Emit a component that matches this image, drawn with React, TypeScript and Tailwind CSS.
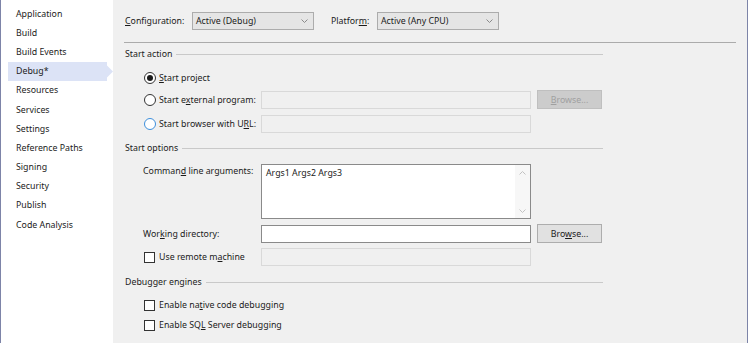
import type { ReactNode } from 'react';

const navItems = [
  'Application',
  'Build',
  'Build Events',
  'Debug*',
  'Resources',
  'Services',
  'Settings',
  'Reference Paths',
  'Signing',
  'Security',
  'Publish',
  'Code Analysis',
];

function Key({ children }: { children: ReactNode }) {
  return <span className="underline underline-offset-1">{children}</span>;
}

function Chevron({ up, color = '#8a8a8a' }: { up?: boolean; color?: string }) {
  return (
    <svg width="7" height="4" viewBox="0 0 7 4" fill="none" stroke={color} strokeWidth="1">
      {up ? <polyline points="0.5 3.5 3.5 0.5 6.5 3.5" /> : <polyline points="0.5 0.5 3.5 3.5 6.5 0.5" />}
    </svg>
  );
}

function Dropdown({ value }: { value: string }) {
  return (
    <div className="w-[122px] h-[18px] border border-[#acacac] bg-[#e5e5e5] flex items-center justify-between pl-[3px] pr-[5px]">
      <span>{value}</span>
      <Chevron />
    </div>
  );
}

function SectionHeader({ title }: { title: string }) {
  return (
    <div className="w-[479px] h-[14px] flex items-center gap-[4px] pl-px">
      <span>{title}</span>
      <div className="flex-1 h-px bg-[#c9c9c9]" />
    </div>
  );
}

function Radio({ checked, focus }: { checked?: boolean; focus?: boolean }) {
  return (
    <span
      className={`w-[12px] h-[12px] rounded-full border bg-white flex items-center justify-center flex-shrink-0 ${
        focus ? 'border-[#3d8fdc]' : 'border-[#333333]'
      }`}
    >
      {checked && <span className="w-[6px] h-[6px] rounded-full bg-[#1b1b1b]" />}
    </span>
  );
}

function Checkbox() {
  return <span className="w-[11px] h-[11px] border border-[#333333] bg-white flex-shrink-0" />;
}

function DisabledInput() {
  return <div className="w-[270px] h-[18px] border border-[#d9d9d9] bg-[#f0f0f0]" />;
}

export default function App() {
  return (
    <div className="w-[749px] h-[343px] overflow-hidden flex bg-white text-[8.8px] text-[#1b1b1b] font-['Noto_Sans',sans-serif] leading-[14px]">
      {/* Sidebar */}
      <div className="w-[113px] h-full bg-white border-l border-[#7d84a8] pt-[4px] flex flex-col">
        {navItems.map((item) => {
          const selected = item === 'Debug*';
          return (
            <div key={item} className="h-[19.2px] flex items-center">
              <div className={`w-[99px] h-full ml-[7px] flex items-center pl-[8px] ${selected ? 'bg-[#dce3f6]' : ''}`}>
                {item}
              </div>
              {selected && (
                <svg width="6" height="19" viewBox="0 0 6 19">
                  <polygon points="0,3.5 6,9.5 0,15.5" fill="#dce3f6" />
                </svg>
              )}
            </div>
          );
        })}
      </div>

      {/* Main */}
      <div className="flex-1 h-full bg-[#f0f0f0] border-r border-[#7d84a8] pl-[11px] pt-[11px] flex flex-col">
        {/* Configuration bar */}
        <div className="h-[20px] flex items-center">
          <span className="w-[68px] pl-px">
            <Key>C</Key>onfiguration:
          </span>
          <Dropdown value="Active (Debug)" />
          <span className="w-[46px] ml-[17px]">
            Platfor<Key>m</Key>:
          </span>
          <Dropdown value="Active (Any CPU)" />
        </div>
        <div className="mt-[11px] w-[612px] h-px bg-[#ababab]" />

        {/* Start action */}
        <div className="mt-[4px]">
          <SectionHeader title="Start action" />
        </div>
        <div className="mt-[7px] h-[20px] pl-[20px] flex items-center gap-[3px]">
          <Radio checked />
          <span>
            <Key>S</Key>tart project
          </span>
        </div>
        <div className="mt-[2px] h-[19px] pl-[20px] flex items-center">
          <div className="w-[117px] flex items-center gap-[3px]">
            <Radio />
            <span>
              Start e<Key>x</Key>ternal program:
            </span>
          </div>
          <DisabledInput />
          <div className="ml-[6px] w-[65px] h-[19px] border border-[#bfbfbf] bg-[#cccccc] text-[#a0a0a0] flex items-center justify-center">
            <span>
              <Key>B</Key>rowse...
            </span>
          </div>
        </div>
        <div className="mt-[5px] h-[19px] pl-[20px] flex items-center">
          <div className="w-[117px] flex items-center gap-[3px]">
            <Radio focus />
            <span>
              Start browser with U<Key>R</Key>L:
            </span>
          </div>
          <DisabledInput />
        </div>

        {/* Start options */}
        <div className="mt-[8px]">
          <SectionHeader title="Start options" />
        </div>
        <div className="mt-[9px] h-[55px] pl-[19px] flex items-start">
          <span className="w-[118px]">
            Comman<Key>d</Key> line arguments:
          </span>
          <div className="w-[270px] h-[55px] border border-[#8a8a8a] bg-white flex">
            <div className="flex-1 pl-[4px] pt-px">Args1 Args2 Args3</div>
            <div className="w-[15px] h-full bg-[#f7f7f7] flex flex-col items-center justify-between pt-[6px] pb-[5px]">
              <Chevron up color="#c2c2c2" />
              <Chevron color="#c2c2c2" />
            </div>
          </div>
        </div>
        <div className="mt-[5px] h-[19px] pl-[19px] flex items-center">
          <span className="w-[118px]">
            Wor<Key>k</Key>ing directory:
          </span>
          <div className="w-[270px] h-[18px] border border-[#8a8a8a] bg-white" />
          <div className="ml-[6px] w-[65px] h-[19px] border border-[#adadad] bg-[#e1e1e1] flex items-center justify-center">
            <span>
              Bro<Key>w</Key>se...
            </span>
          </div>
        </div>
        <div className="mt-[5px] h-[18px] pl-[20px] flex items-center">
          <div className="w-[117px] flex items-center gap-[4px]">
            <Checkbox />
            <span>
              Use remote m<Key>a</Key>chine
            </span>
          </div>
          <DisabledInput />
        </div>

        {/* Debugger engines */}
        <div className="mt-[9px]">
          <SectionHeader title="Debugger engines" />
        </div>
        <div className="mt-[6px] h-[20px] pl-[20px] flex items-center gap-[4px]">
          <Checkbox />
          <span>
            Enable na<Key>t</Key>ive code debugging
          </span>
        </div>
        <div className="h-[20px] pl-[20px] flex items-center gap-[4px]">
          <Checkbox />
          <span>
            Enable SQ<Key>L</Key> Server debugging
          </span>
        </div>
      </div>
      <div className="w-px h-full bg-white" />
    </div>
  );
}
